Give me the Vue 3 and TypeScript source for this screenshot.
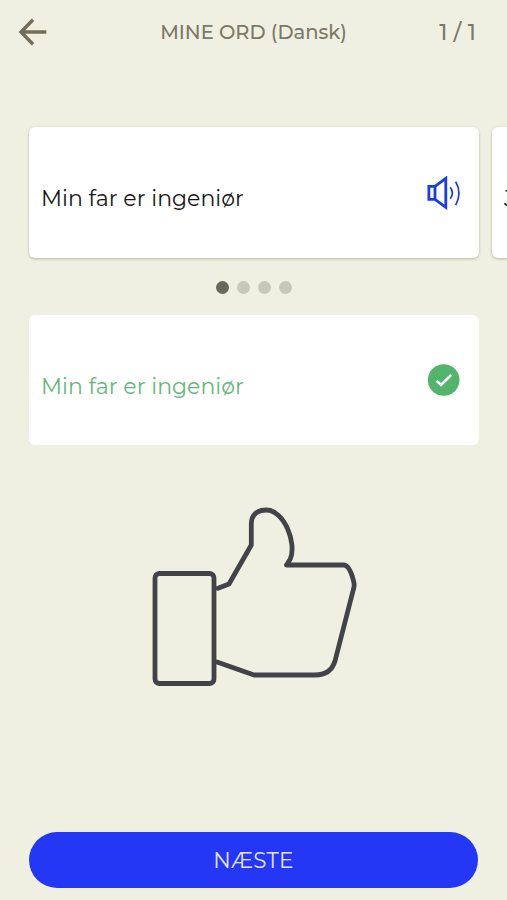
<script setup lang="ts">
import { ref } from 'vue'

interface Phrase {
  id: number
  text: string
}

const title = 'MINE ORD (Dansk)'
const progress = '1 / 1'
const phrases: Phrase[] = [
  { id: 1, text: 'Min far er ingeniør' },
  { id: 2, text: 'J' },
]
const dotCount = 4
const active = ref(0)
</script>

<template>
  <main class="screen">
    <header class="top">
      <button class="back" aria-label="Tilbage">
        <svg width="30" height="30" viewBox="0 0 30 30">
          <path d="M15 2.8 3 15l12 12.2M3.3 15h25" />
        </svg>
      </button>
      <h1 class="title">{{ title }}</h1>
      <span class="progress">{{ progress }}</span>
    </header>

    <section class="carousel">
      <article v-for="p in phrases" :key="p.id" class="card raised">
        <span class="phrase">{{ p.text }}</span>
        <svg v-if="p.id === 1" class="speaker" width="34" height="34" viewBox="0 0 34 34">
          <path class="body" d="M1.9 10.3H8V23.3H1.9ZM8 10.3 18.8 2.3V31.3L8 23.3" />
          <path class="wave" d="M23.2 11.3Q27.6 17 23.2 22.8M28.7 5.6Q35.2 17 28.7 29.1" />
        </svg>
      </article>
    </section>

    <nav class="dots">
      <button
        v-for="n in dotCount"
        :key="n"
        class="dot"
        :class="{ on: active === n - 1 }"
        :aria-label="`Kort ${n}`"
        @click="active = n - 1"
      />
    </nav>

    <section class="card answer">
      <span class="phrase">{{ phrases[0].text }}</span>
      <svg class="check" width="32" height="32" viewBox="0 0 32 32">
        <circle cx="15.7" cy="16" r="15.8" />
        <path d="M8.600 16.700 13 21 23.200 10.800" />
      </svg>
    </section>

    <svg class="thumb" width="210" height="184" viewBox="150 505 210 184">
      <rect x="155" y="573.5" width="59" height="110" rx="4.5" />
      <path d="M218 588.3 229 584 251.3 545V524C251.3 514.500 257 510 266.500 510C284 510 297 543 290.300 559L286.500 565H343.500C349 565 352 574 354 583Q354.500 586 353.500 589L335 661C332 671 325 675 315 675H254L217 662" />
    </svg>

    <button class="next">NÆSTE</button>
  </main>
</template>

<style>
body {
  background: #f0f0e2;
}
</style>

<style scoped>
.screen {
  box-sizing: border-box;
  display: flex;
  flex-direction: column;
  height: 900px;
  overflow: hidden;
  padding: 0 28px 12px 29px;
  background: #f0f0e2;
  font-family: Montserrat, Inter, "Liberation Sans", sans-serif;
}
button {
  padding: 0;
  border: 0;
  background: none;
  font: inherit;
}
svg {
  display: block;
  flex: none;
}
path,
rect {
  fill: none;
}
.top {
  display: grid;
  grid-template-columns: 100px 1fr 100px;
  align-items: center;
  height: 64px;
  margin: 0 3px 63px -11px;
  color: #7c7866;
}
.back path {
  stroke: #716d5a;
  stroke-width: 3.4;
}
.title {
  margin: 0 0 0 13px;
  text-align: center;
  white-space: nowrap;
  font-size: 19.5px;
  font-weight: 500;
}
.progress {
  text-align: right;
  font-size: 22px;
  font-weight: 500;
  letter-spacing: 0.2px;
}
.carousel {
  display: flex;
  flex: none;
  gap: 13px;
}
.card {
  box-sizing: border-box;
  display: flex;
  flex: none;
  align-items: center;
  justify-content: space-between;
  width: 450px;
  height: 130px;
  padding: 0 18px 0 12px;
  border-radius: 6px;
  background: #fff;
}
.raised {
  height: 131px;
  box-shadow: 0 1px 3px rgba(80, 80, 60, 0.35);
}
.phrase {
  margin-top: 13px;
  white-space: nowrap;
  font-size: 22px;
  line-height: 28px;
  color: #171717;
}
.speaker {
  stroke: #183be5;
}
.body {
  stroke-width: 2.8;
}
.wave {
  stroke-width: 1.7;
}
.dots {
  display: flex;
  justify-content: center;
  gap: 8px;
  height: 13px;
  margin: 23px 1px 21px 0;
}
.dot {
  width: 13px;
  height: 13px;
  border-radius: 50%;
  background: #c8c8b9;
}
.dot.on {
  background: #696957;
}
.answer .phrase {
  margin-top: 14px;
  color: #65b779;
}
.check {
  margin-right: 1px;
}
.check circle {
  fill: #52b56b;
}
.check path {
  stroke: #fff;
  stroke-width: 2.6;
}
.thumb {
  margin: 60px 0 0 121px;
}
.thumb rect,
.thumb path {
  stroke: #414348;
  stroke-width: 4.8;
  stroke-linecap: round;
  stroke-linejoin: round;
}
.next {
  flex: none;
  width: 449px;
  height: 56px;
  margin-top: auto;
  border-radius: 28px;
  background: #2437f5;
  color: #e3e5ff;
  font-size: 21.5px;
  letter-spacing: 0.2px;
}
</style>
